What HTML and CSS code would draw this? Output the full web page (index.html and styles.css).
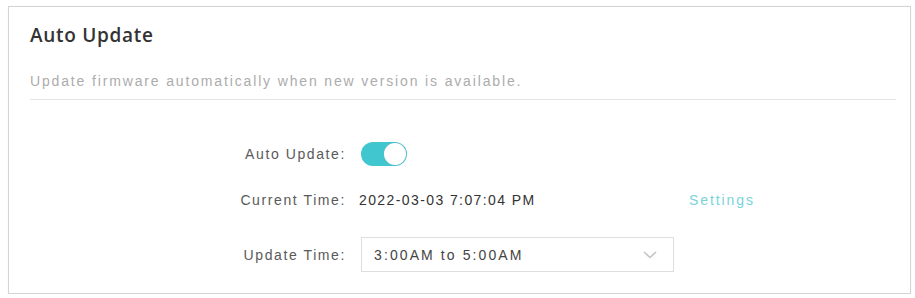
FILE: index.html
```html
<!DOCTYPE html>
<html>
<head>
<meta charset="utf-8">
<link rel="stylesheet" href="styles.css">
</head>
<body>
<div class="card">
  <h2 class="title">Auto Update</h2>
  <p class="desc">Update firmware automatically when new version is available.</p>
  <div class="divider"></div>
  <div class="form">
    <div class="row">
      <span class="label">Auto Update:</span>
      <span class="toggle"><span class="knob"></span></span>
    </div>
    <div class="row">
      <span class="label">Current Time:</span>
      <span class="value">2022-03-03 7:07:04 PM</span>
      <a class="link">Settings</a>
    </div>
    <div class="row">
      <span class="label">Update Time:</span>
      <div class="select">
        <span class="select-text">3:00AM to 5:00AM</span>
        <svg class="chev" width="14" height="8" viewBox="0 0 14 8"><path d="M1 1 L7 6.5 L13 1" fill="none" stroke="#c4c4c4" stroke-width="1.6"/></svg>
      </div>
    </div>
  </div>
</div>
</body>
</html>
```
FILE: styles.css
```css
html, body { margin: 0; padding: 0; background: #fff; }
body { font-family: "Liberation Sans", Arial, sans-serif; }
.card {
  margin: 6px 0 0 8px;
  width: 901px;
  height: 286px;
  border: 1px solid #d4d4d4;
  box-shadow: 0 0 1px #e6e6e6;
  box-sizing: content-box;
}
.title {
  margin: 0;
  padding: 14px 0 0 21px;
  font-family: "Open Sans", sans-serif;
  font-weight: 600;
  font-size: 19px;
  line-height: 28px;
  letter-spacing: 0.7px;
  color: #333;
}
.desc {
  margin: 0;
  padding: 24px 0 0 21px;
  font-size: 14px;
  line-height: 16px;
  letter-spacing: 1.85px;
  color: #acacac;
}
.divider {
  margin: 10px 14px 0 21px;
  height: 1px;
  background: #e4e4e4;
}
.form {
  display: flex;
  flex-direction: column;
  padding-top: 42px;
}
.row {
  display: flex;
  align-items: center;
  font-size: 14px;
  letter-spacing: 1.6px;
}
.label {
  width: 337px;
  text-align: right;
  color: #5a5a5a;
  flex-shrink: 0;
}
.toggle {
  margin-left: 15px;
  width: 46px;
  height: 24px;
  border-radius: 12px;
  background: #3fc6cf;
  display: flex;
  justify-content: flex-end;
  align-items: center;
  padding: 0 1px;
  box-sizing: border-box;
}
.knob {
  width: 22px;
  height: 22px;
  border-radius: 50%;
  background: #fff;
  box-shadow: 0 0 1px #9aa;
}
.row:nth-child(2) { height: 26px; margin-top: 21px; }
.value {
  margin-left: 13px;
  width: 330px;
  color: #333;
  letter-spacing: 1.4px;
}
.link {
  color: #79d3d9;
  letter-spacing: 1.9px;
}
.row:nth-child(3) { margin-top: 24px; }
.select {
  margin-left: 15px;
  width: 313px;
  height: 35px;
  border: 1px solid #dedede;
  box-sizing: border-box;
  display: flex;
  align-items: center;
  justify-content: space-between;
  padding: 0 16px 0 12px;
}
.select-text { color: #444; letter-spacing: 2.1px; }
.chev { display: block; }
```
